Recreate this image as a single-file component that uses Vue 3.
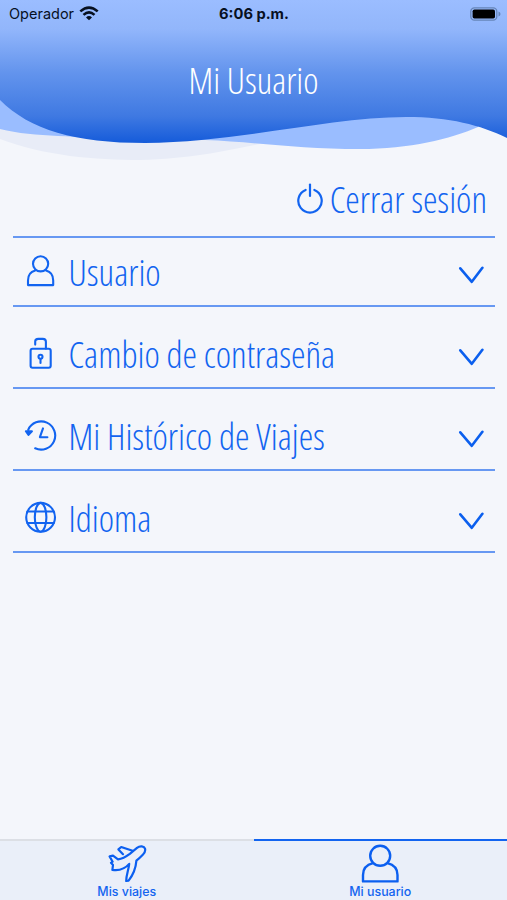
<script setup>
const rows = [
  { label: 'Usuario', icon: 'user' },
  { label: 'Cambio de contraseña', icon: 'lock' },
  { label: 'Mi Histórico de Viajes', icon: 'history' },
  { label: 'Idioma', icon: 'globe' },
]
</script>

<template>
  <div class="screen">
    <header class="header">
      <svg class="waves" viewBox="0 0 507 170" width="507" height="170">
        <defs>
          <linearGradient id="sky" x1="0" y1="0" x2="0" y2="145" gradientUnits="userSpaceOnUse">
            <stop offset="0" stop-color="#9bbdff" />
            <stop offset="0.2" stop-color="#92b6fb" />
            <stop offset="0.5" stop-color="#6394ed" />
            <stop offset="0.8" stop-color="#3f79e2" />
            <stop offset="1" stop-color="#1259d9" />
          </linearGradient>
        </defs>
        <path d="M0 120 L0 139 C45 156 95 160 140 160 C190 159 225 151 260 144 L200 120Z" fill="#e8ecf7" />
        <path d="M0 90 L0 129 C35 138 80 135 120 140 L205 140 C255 142 300 149 360 149 C410 149 450 139 478 127 L478 100Z" fill="#9abdff" />
        <path d="M0 0 H507 V138 C480 125 450 117 406 117 C330 117 240 142 145 143 C75 143 30 130 0 100Z" fill="url(#sky)" />
      </svg>
      <div class="status">
        <div class="carrier">
          <span>Operador</span>
          <svg width="20" height="15" viewBox="0 0 20 15">
            <g fill="none" stroke="#07101f" stroke-width="2.6">
              <path d="M1.3 5.4 Q10 -2.3 18.7 5.4" />
              <path d="M4.5 8.9 Q10 4 15.5 8.9" />
            </g>
            <path d="M7 11.4 Q10 8.6 13 11.4 L10 14.2Z" fill="#07101f" />
          </svg>
        </div>
        <span class="time">6:06 p.m.</span>
        <svg class="battery" width="31" height="14" viewBox="0 0 31 14">
          <rect x="0.8" y="0.8" width="26" height="12.4" rx="3.6" fill="none" stroke="#6685b8" stroke-width="1.3" />
          <rect x="2.6" y="2.5" width="22.4" height="9" rx="1.8" fill="#000" />
          <path d="M28.5 4.6 Q30.5 5.2 30.5 7 Q30.5 8.8 28.5 9.4Z" fill="#6685b8" />
        </svg>
      </div>
      <h1 class="title">Mi Usuario</h1>
    </header>

    <main class="content">
      <div class="logout">
        <svg width="28" height="32" viewBox="0 0 28 32" fill="none" stroke="#1264f0" stroke-width="2.2">
          <path d="M9.6 7 A11.7 11.7 0 1 0 18.4 7" stroke-linecap="round" />
          <path d="M14 1.5 V13" stroke-linecap="round" />
        </svg>
        <span class="label">Cerrar sesión</span>
      </div>
      <div v-for="row in rows" :key="row.icon" class="row">
        <svg class="icon" width="34" height="34" viewBox="0 0 34 34" fill="none" stroke="#1264f0" stroke-width="2.1" stroke-linejoin="round" stroke-linecap="round">
          <template v-if="row.icon === 'user'">
            <circle cx="17.6" cy="9.8" r="7.6" />
            <path d="M12.2 16.6 C7 18 5 22.3 5 26.5 V31.1 H30.2 V26.5 C30.2 22.3 28.2 18 23 16.6" />
          </template>
          <template v-else-if="row.icon === 'lock'">
            <rect x="7.6" y="12.8" width="20.1" height="19" rx="2" />
            <path d="M12.2 8.6 V5.6 Q12.2 2.9 15.3 2.9 H19.8 Q22.9 2.9 22.9 5.8 V12.6" />
            <circle cx="17.5" cy="20.8" r="2" />
            <path d="M17.5 23 V27" />
          </template>
          <template v-else-if="row.icon === 'history'">
            <path d="M5.2 11.8 A14.1 14.1 0 1 1 12.2 30.3" />
            <path d="M2.9 13.2 L5.5 16.8 L8.9 13.2Z" fill="#1264f0" />
            <path d="M20 10.4 L16.9 19.2 H24.4" />
          </template>
          <template v-else>
            <circle cx="17.6" cy="17.3" r="14.4" />
            <ellipse cx="17.6" cy="17.3" rx="5.8" ry="14.4" />
            <path d="M4.4 11.5 H30.8 M4.4 23 H30.8" />
          </template>
        </svg>
        <span class="label">{{ row.label }}</span>
        <svg class="chevron" width="26" height="18" viewBox="0 0 26 18" fill="none" stroke="#0b5fee" stroke-width="2.6" stroke-linecap="round" stroke-linejoin="round">
          <path d="M2.3 2.3 L13.8 15.8 L24.4 1.8" />
        </svg>
      </div>
    </main>

    <nav class="tabs">
      <div class="tab">
        <svg width="40" height="40" viewBox="0 0 40 40" fill="none" stroke="#0b5ff0" stroke-width="2.2" stroke-linejoin="round" stroke-linecap="round">
          <path d="M22.8 10.8 L30 4.9 C33 2.6 37.2 3.1 38 5.6 C38.7 8 37.6 10 35.8 11.7 C33.8 13.8 31.6 15.8 29.4 17.6 C28.8 25.4 26 32 21.6 37.6 L19.2 38 C19.2 32.2 21.6 27 22.2 20.9 C18.4 25.4 12.4 27.8 5.4 26.8 L6 21.9 L4 19.8 L5.6 18.7 L2.6 13.4 L6 12.7 L11 16.4 C14.8 15.8 18.6 13.9 22.8 10.8Z" />
          <path d="M16 11.2 L11.4 6.4 L14.2 4 L25.6 7.8" />
        </svg>
        <span>Mis viajes</span>
      </div>
      <div class="tab active">
        <svg width="40" height="40" viewBox="0 0 40 40" fill="none" stroke="#0b5ff0" stroke-width="2.4" stroke-linejoin="round">
          <circle cx="20.2" cy="12.8" r="10" />
          <path d="M13 20.2 C6.4 21.8 3 26.4 3 32 V38.4 H37.5 V32 C37.5 26.4 34 21.8 27.4 20.2" />
        </svg>
        <span>Mi usuario</span>
      </div>
    </nav>
  </div>
</template>

<style>
body { background: #f4f6fb; }
</style>

<style scoped>
.screen {
  width: 507px;
  height: 900px;
  display: flex;
  flex-direction: column;
  background: #f4f6fb;
  color: #1264f0;
  overflow: hidden;
}
.header {
  position: relative;
  height: 170px;
}
.waves {
  position: absolute;
  top: 0;
  left: 0;
}
.status {
  position: relative;
  display: grid;
  grid-template-columns: 1fr auto 1fr;
  align-items: center;
  height: 27px;
  padding: 0 6px 0 9px;
  font-family: Inter, sans-serif;
  font-size: 14.5px;
  color: #07101f;
}
.carrier {
  display: flex;
  align-items: center;
  gap: 5px;
}
.time {
  font-weight: 700;
  font-size: 14.7px;
  margin-right: 2px;
}
.battery {
  justify-self: end;
}
.title,
.label {
  font-family: "Open Sans", sans-serif;
  font-stretch: 75%;
  font-weight: 300;
  font-size: 36.6px;
  line-height: 50px;
  white-space: nowrap;
}
.title {
  position: relative;
  margin: 28px 0 0;
  text-align: center;
  font-size: 36.4px;
  color: #fff;
}
.content {
  flex: 1;
  padding: 0 12px 0 13px;
}
.logout {
  display: flex;
  align-items: center;
  justify-content: flex-end;
  gap: 6px;
  box-sizing: border-box;
  height: 68px;
  padding: 0 8px 9px 0;
  border-bottom: 2px solid #6798f2;
}
.row {
  display: flex;
  align-items: flex-end;
  box-sizing: border-box;
  height: 82px;
  padding: 0 11px 8px 10px;
  border-bottom: 2px solid #6798f2;
}
.logout + .row {
  height: 69px;
}
.icon {
  margin: 0 11.5px 9px 0;
}
.chevron {
  margin: 0 0 13px auto;
}
.tabs {
  display: flex;
  height: 61px;
  background: #eaeff9;
}
.tab {
  flex: 1;
  display: flex;
  flex-direction: column;
  align-items: center;
  box-sizing: border-box;
  padding: 2px 0 0;
  border-top: 2px solid #dcdfe5;
  font: 500 12.4px/17px Inter, sans-serif;
}
.tab.active {
  border-top-color: #1264f0;
}
</style>
